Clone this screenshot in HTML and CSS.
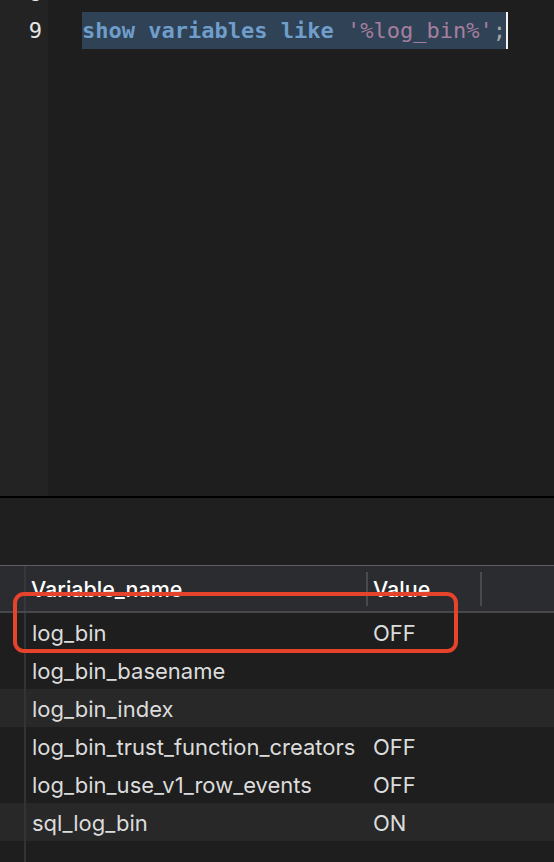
FILE: index.html
```html
<!DOCTYPE html>
<html>
<head>
<meta charset="utf-8">
<link rel="stylesheet" href="styles.css">
</head>
<body>
<div class="editor">
  <div class="gutter">
    <div class="lines">
      <div class="ln">8</div>
      <div class="ln">9</div>
    </div>
  </div>
  <div class="code">
    <div class="lines">
      <div class="cl"></div>
      <div class="cl"><span class="sel"><span class="kw">show</span> <span class="kw">variables</span> <span class="kw">like</span> <span class="str">'%log_bin%'</span><span class="punc">;</span></span><span class="caret"></span></div>
    </div>
  </div>
</div>
<div class="divider"></div>
<div class="gap"></div>
<div class="results">
  <div class="hrow">
    <div class="strip"></div>
    <div class="hcell name"><span>Variable_name</span></div>
    <div class="hcell val sep"><span>Value</span></div>
    <div class="hcell rest sep"></div>
  </div>
  <div class="row">
    <div class="strip"></div><div class="cell name">log_bin</div><div class="cell val">OFF</div><div class="cell"></div>
  </div>
  <div class="row">
    <div class="strip"></div><div class="cell name">log_bin_basename</div><div class="cell val"></div><div class="cell"></div>
  </div>
  <div class="row alt">
    <div class="strip"></div><div class="cell name">log_bin_index</div><div class="cell val"></div><div class="cell"></div>
  </div>
  <div class="row">
    <div class="strip"></div><div class="cell name">log_bin_trust_function_creators</div><div class="cell val">OFF</div><div class="cell"></div>
  </div>
  <div class="row">
    <div class="strip"></div><div class="cell name">log_bin_use_v1_row_events</div><div class="cell val">OFF</div><div class="cell"></div>
  </div>
  <div class="row alt">
    <div class="strip"></div><div class="cell name">sql_log_bin</div><div class="cell val">ON</div><div class="cell"></div>
  </div>
  <div class="row filler">
    <div class="strip"></div><div class="cell name"></div><div class="cell val"></div><div class="cell"></div>
  </div>
  <div class="highlight"></div>
</div>
</body>
</html>
```
FILE: styles.css
```css
* { box-sizing: border-box; }
html, body {
  margin: 0;
  padding: 0;
  width: 554px;
  height: 862px;
  overflow: hidden;
  background: #1e1e1e;
}
.editor {
  display: flex;
  height: 496px;
  overflow: hidden;
}
.gutter {
  width: 48px;
  background: #232323;
  flex: none;
}
.code {
  flex: 1;
  background: #1e1e1e;
  padding-left: 34px;
}
.lines {
  margin-top: -25px;
}
.ln {
  height: 37px;
  line-height: 37px;
  text-align: right;
  padding-right: 6px;
  font-family: "DejaVu Sans Mono", monospace;
  font-size: 22px;
  color: #e6e6e6;
}
.cl {
  height: 37px;
  line-height: 37px;
  font-family: "DejaVu Sans Mono", monospace;
  font-size: 22px;
  white-space: pre;
  display: flex;
  align-items: stretch;
}
.sel {
  background: #2f4256;
  display: inline-block;
  height: 37px;
}
.kw { color: #6f9ecb; font-weight: bold; }
.str { color: #a67e9e; }
.punc { color: #a8a8a8; }
.caret {
  display: inline-block;
  width: 2px;
  height: 37px;
  background: #f2f2f2;
}
.divider {
  height: 2px;
  background: #000;
}
.gap {
  height: 67px;
  background: #1f1f1f;
}
.results {
  position: relative;
  border-top: 1px solid #5e5e60;
  font-family: "Inter", "Liberation Sans", sans-serif;
}
.hrow, .row {
  display: grid;
  grid-template-columns: 26px 340px 114px 1fr;
}
.hrow {
  height: 47px;
  background: #2b2c30;
  border-bottom: 2px solid #48484c;
}
.strip {
  border-right: 2px solid #333336;
}
.hrow .strip { border-right-color: #38383c; }
.hcell {
  color: #ffffff;
  font-size: 21.5px;
  font-weight: 500;
  overflow: hidden;
}
.hcell span {
  display: block;
  line-height: 24px;
  padding-top: 11px;
  white-space: nowrap;
}
.hcell.name { padding-left: 5px; }
.hcell.val { padding-left: 5px; }
.hcell.sep {
  margin-top: 6px;
  height: 34px;
  border-left: 2px solid #4a4a4e;
}
.hcell.sep span { padding-top: 5px; }
.row {
  height: 38px;
  background: #1e1e1e;
}
.row.alt { background: #282828; }
.row.filler { height: 40px; }
.cell {
  color: #dcdcdc;
  font-size: 22px;
  line-height: 35px;
  padding-top: 3px;
  white-space: nowrap;
}
.cell.name { padding-left: 6px; }
.cell.val { padding-left: 7px; }
.highlight {
  position: absolute;
  left: 13px;
  top: 26px;
  width: 445px;
  height: 61px;
  border: 4px solid #e5432c;
  border-radius: 11px;
  pointer-events: none;
}
```
